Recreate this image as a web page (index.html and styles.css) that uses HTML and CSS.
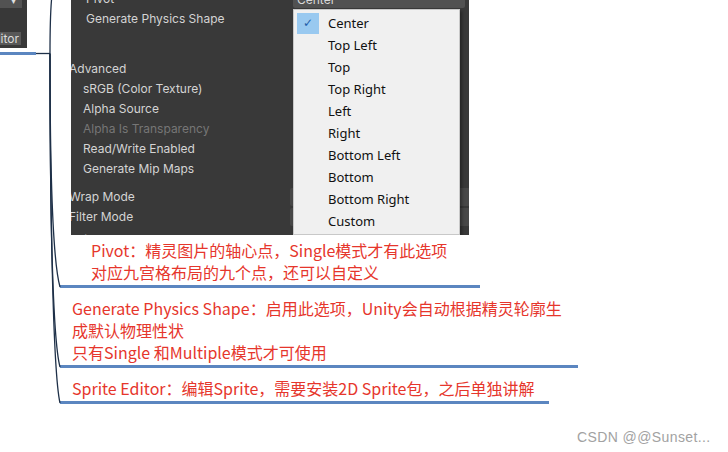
FILE: index.html
```html
<!DOCTYPE html>
<html lang="zh">
<head>
<meta charset="utf-8">
<title>Sprite import settings mind map</title>
<link rel="stylesheet" href="styles.css">
</head>
<body>
<div class="page">
  <svg class="links" width="728" height="452" viewBox="0 0 728 452">
    <path class="blue" d="M0 53.5 H36"/>
    <path class="dark" d="M36 53.5 H50"/>
    <path class="dark" d="M50 53.5 C 50 35, 50.5 12, 51.5 0"/>
    <path class="dark" d="M50 53.5 C 50 140, 51 255, 60 287"/>
    <path class="dark" d="M50 53.5 C 50 170, 51.5 335, 60 367"/>
    <path class="dark" d="M50 53.5 C 50 190, 52.5 370, 60 403"/>
  </svg>

  <div class="top">
    <div class="stub">
      <div class="stub-field"><span class="stub-arrow">▾</span></div>
      <div class="stub-btn">Editor</div>
    </div>

    <div class="panel">
      <div class="props">
        <div class="row ind-a">Pivot</div>
        <div class="row ind-a">Generate Physics Shape</div>
        <div class="spacer-a"></div>
        <div class="row ind-h">Advanced</div>
        <div class="row ind-b">sRGB (Color Texture)</div>
        <div class="row ind-b">Alpha Source</div>
        <div class="row ind-b disabled">Alpha Is Transparency</div>
        <div class="row ind-b">Read/Write Enabled</div>
        <div class="row ind-b">Generate Mip Maps</div>
        <div class="spacer-b"></div>
        <div class="row ind-h field-row">Wrap Mode<span class="field"></span></div>
        <div class="row ind-h field-row">Filter Mode<span class="field"></span></div>
        <div class="row ind-h last">Aniso Level</div>
      </div>

      <div class="pivot-field">Center</div>

      <ul class="popup">
        <li class="opt selected"><span class="check">✓</span>Center</li>
        <li class="opt"><span class="check"></span>Top Left</li>
        <li class="opt"><span class="check"></span>Top</li>
        <li class="opt"><span class="check"></span>Top Right</li>
        <li class="opt"><span class="check"></span>Left</li>
        <li class="opt"><span class="check"></span>Right</li>
        <li class="opt"><span class="check"></span>Bottom Left</li>
        <li class="opt"><span class="check"></span>Bottom</li>
        <li class="opt"><span class="check"></span>Bottom Right</li>
        <li class="opt"><span class="check"></span>Custom</li>
      </ul>
    </div>
  </div>

  <div class="branches">
    <div class="node n1">Pivot：精灵图片的轴心点，Single模式才有此选项<br>对应九宫格布局的九个点，还可以自定义</div>
    <div class="node n2">Generate Physics Shape：启用此选项，Unity会自动根据精灵轮廓生<br>成默认物理性状<br>只有Single 和Multiple模式才可使用</div>
    <div class="node n3">Sprite Editor：编辑Sprite，需要安装2D Sprite包，之后单独讲解</div>
  </div>

  <div class="watermark">CSDN @@Sunset...</div>
</div>
</body>
</html>
```

FILE: styles.css
```css
* { box-sizing: border-box; }

html, body {
  margin: 0;
  padding: 0;
  background: #ffffff;
}

body {
  width: 728px;
  height: 452px;
  overflow: hidden;
}

.page {
  position: relative;
  width: 728px;
  height: 452px;
}

.links {
  position: absolute;
  left: 0;
  top: 0;
  z-index: 2;
  pointer-events: none;
}
.links path { fill: none; }
.links .blue { stroke: #5b86c0; stroke-width: 3; }
.links .dark { stroke: #1e3048; stroke-width: 1.3; }

/* ---------- top screenshot area ---------- */
.top {
  display: flex;
  align-items: flex-start;
  height: 235px;
}

.stub {
  width: 27px;
  height: 48px;
  background: #383838;
  display: flex;
  flex-direction: column;
  gap: 24px;
}
.stub-field {
  width: 22px;
  height: 8px;
  background: #525252;
  position: relative;
  overflow: hidden;
}
.stub-arrow {
  position: absolute;
  left: 11px;
  top: -6px;
  font: 10px/14px "DejaVu Sans", sans-serif;
  color: #e0e0e0;
}
.stub-btn {
  width: 21px;
  height: 13px;
  background: #585858;
  color: #dcdcdc;
  font: 12px/13px Inter, "Noto Sans", sans-serif;
  overflow: hidden;
  direction: rtl;
  white-space: nowrap;
  padding-right: 2px;
}

.panel {
  margin-left: 44px;
  width: 398px;
  height: 235px;
  background: #393939;
  position: relative;
  overflow: hidden;
  font: 12px/20px Inter, "Noto Sans", sans-serif;
  color: #d4d4d4;
}

.props {
  margin-top: -11px;
  display: flex;
  flex-direction: column;
}
.row {
  height: 20px;
  white-space: nowrap;
  position: relative;
}
.ind-a { padding-left: 15px; }
.ind-b { padding-left: 12px; }
.ind-h { margin-left: -2px; }
.last { margin-top: 3px; }
.disabled { color: #767676; }
.spacer-a { height: 30px; }
.spacer-b { height: 8px; }

.field {
  position: absolute;
  left: 221px;
  top: 1px;
  width: 180px;
  height: 18px;
  background: #484848;
  border-radius: 2px;
}

.pivot-field {
  position: absolute;
  left: 222px;
  top: -8px;
  width: 172px;
  height: 16px;
  background: #515151;
  color: #d8d8d8;
  padding-left: 4px;
  font: 12px/16px Inter, "Noto Sans", sans-serif;
  border-radius: 2px;
}

/* ---------- dropdown popup (overlay) ---------- */
.popup {
  position: absolute;
  left: 222px;
  top: 9px;
  width: 167px;
  height: 226px;
  margin: 0;
  padding: 2px 0 0 3px;
  list-style: none;
  background: #f0f0f0;
  border: 1px solid #c8c8c8;
  box-shadow: 2px 2px 3px rgba(0, 0, 0, 0.35);
  font: 13px/22px "Noto Sans", "Open Sans", sans-serif;
  color: #111111;
}
.opt {
  display: flex;
  align-items: center;
  height: 22px;
  gap: 9px;
}
.check {
  width: 22px;
  height: 21px;
  flex: none;
  display: flex;
  align-items: center;
  justify-content: center;
  font: bold 12px/21px "DejaVu Sans", sans-serif;
  color: #1f5da8;
}
.selected .check {
  background: #99c9f0;
}

/* ---------- mind map branches ---------- */
.branches {
  margin-top: 4px;
  padding-left: 60px;
  display: flex;
  flex-direction: column;
  align-items: flex-start;
  gap: 9px;
}
.node {
  font: 16px/22px "Noto Sans CJK SC", "Noto Sans", sans-serif;
  color: #e6362c;
  white-space: nowrap;
  border-bottom: 3px solid #5b86c0;
  padding-bottom: 2px;
  padding-left: 12px;
}
.n1 { width: 420px; padding-left: 31px; }
.n2 { width: 518px; }
.n3 { width: 489px; }

.watermark {
  position: absolute;
  left: 577px;
  top: 427px;
  font: 14px/20px "Liberation Sans", Arial, sans-serif;
  color: #a2a2a2;
  letter-spacing: 0.4px;
}
```
